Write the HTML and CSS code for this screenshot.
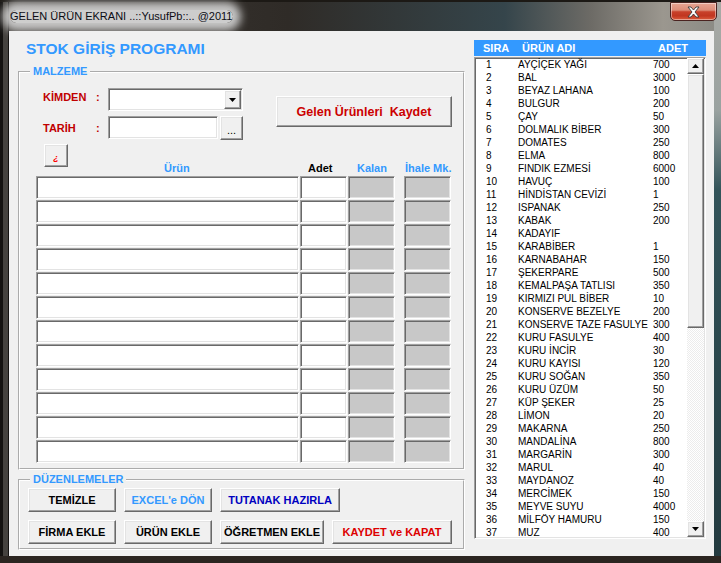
FILE: index.html
```html
<!DOCTYPE html>
<html lang="tr">
<head>
<meta charset="utf-8">
<title>GELEN ÜRÜN EKRANI</title>
<link rel="stylesheet" href="styles.css">
</head>
<body>
<div class="window">
  <header class="titlebar">
    <span class="title">GELEN ÜRÜN EKRANI ..::YusufPb::.. @2011</span>
    <button class="close" aria-label="Kapat">
      <svg width="13" height="12" viewBox="-1 -1 13 12"><path d="M0,0 H3 L5.5,3 L8,0 H11 L7,5 L11,10 H8 L5.5,7 L3,10 H0 L4,5 Z" fill="#fff" stroke="#3a3a3a" stroke-width="0.9" stroke-linejoin="round"/></svg>
    </button>
  </header>
  <main class="client">
    <section class="left">
      <h1 class="app-title">STOK GİRİŞ PROGRAMI</h1>
      <fieldset class="group malzeme">
        <legend>MALZEME</legend>
        <div class="form-top">
          <div class="fields">
            <div class="field">
              <span class="lbl up">KİMDEN</span><span class="colon up">:</span>
              <div class="combo sunken">
                <span class="combo-btn raised"><svg width="7" height="4" viewBox="0 0 7 4"><path d="M0,0 H7 L3.5,4 Z" fill="#000"/></svg></span>
              </div>
            </div>
            <div class="field">
              <span class="lbl">TARİH</span><span class="colon">:</span>
              <div class="date sunken"></div>
              <button class="dots raised">...</button>
            </div>
          </div>
          <button class="save raised">Gelen Ürünleri&nbsp; Kaydet</button>
        </div>
        <div class="grid">
          <div class="gh first"><button class="q raised">¿</button><span class="blue">Ürün</span></div>
          <div class="gh adet">Adet</div>
          <div class="gh kalan blue">Kalan</div>
          <div class="gh ihale blue">İhale Mk.</div>

          <div class="cell sunken"></div><div class="cell sunken"></div><div class="cell sunken ro"></div><div class="cell sunken ro ih"></div>
          <div class="cell sunken"></div><div class="cell sunken"></div><div class="cell sunken ro"></div><div class="cell sunken ro ih"></div>
          <div class="cell sunken"></div><div class="cell sunken"></div><div class="cell sunken ro"></div><div class="cell sunken ro ih"></div>
          <div class="cell sunken"></div><div class="cell sunken"></div><div class="cell sunken ro"></div><div class="cell sunken ro ih"></div>
          <div class="cell sunken"></div><div class="cell sunken"></div><div class="cell sunken ro"></div><div class="cell sunken ro ih"></div>
          <div class="cell sunken"></div><div class="cell sunken"></div><div class="cell sunken ro"></div><div class="cell sunken ro ih"></div>
          <div class="cell sunken"></div><div class="cell sunken"></div><div class="cell sunken ro"></div><div class="cell sunken ro ih"></div>
          <div class="cell sunken"></div><div class="cell sunken"></div><div class="cell sunken ro"></div><div class="cell sunken ro ih"></div>
          <div class="cell sunken"></div><div class="cell sunken"></div><div class="cell sunken ro"></div><div class="cell sunken ro ih"></div>
          <div class="cell sunken"></div><div class="cell sunken"></div><div class="cell sunken ro"></div><div class="cell sunken ro ih"></div>
          <div class="cell sunken"></div><div class="cell sunken"></div><div class="cell sunken ro"></div><div class="cell sunken ro ih"></div>
          <div class="cell sunken"></div><div class="cell sunken"></div><div class="cell sunken ro"></div><div class="cell sunken ro ih"></div>
        </div>
      </fieldset>
      <fieldset class="group duz">
        <legend>DÜZENLEMELER</legend>
        <div class="btn-rows">
          <div class="btn-row">
            <button class="b raised w88">TEMİZLE</button>
            <button class="b raised w88 c-light">EXCEL'e DÖN</button>
            <button class="b raised w120 c-navy">TUTANAK HAZIRLA</button>
          </div>
          <div class="btn-row">
            <button class="b raised w88">FİRMA EKLE</button>
            <button class="b raised w88">ÜRÜN EKLE</button>
            <button class="b raised w104">ÖĞRETMEN EKLE</button>
            <button class="b raised w120 c-red">KAYDET ve KAPAT</button>
          </div>
        </div>
      </fieldset>
    </section>
    <section class="right">
      <div class="list-head"><span>SIRA</span><span>ÜRÜN ADI</span><span>ADET</span></div>
      <div class="listbox">
        <div class="rows">
          <div class="row"><span>1</span><span>AYÇİÇEK YAĞI</span><span>700</span></div>
          <div class="row"><span>2</span><span>BAL</span><span>3000</span></div>
          <div class="row"><span>3</span><span>BEYAZ LAHANA</span><span>100</span></div>
          <div class="row"><span>4</span><span>BULGUR</span><span>200</span></div>
          <div class="row"><span>5</span><span>ÇAY</span><span>50</span></div>
          <div class="row"><span>6</span><span>DOLMALIK BİBER</span><span>300</span></div>
          <div class="row"><span>7</span><span>DOMATES</span><span>250</span></div>
          <div class="row"><span>8</span><span>ELMA</span><span>800</span></div>
          <div class="row"><span>9</span><span>FINDIK EZMESİ</span><span>6000</span></div>
          <div class="row"><span>10</span><span>HAVUÇ</span><span>100</span></div>
          <div class="row"><span>11</span><span>HİNDİSTAN CEVİZİ</span><span>1</span></div>
          <div class="row"><span>12</span><span>ISPANAK</span><span>250</span></div>
          <div class="row"><span>13</span><span>KABAK</span><span>200</span></div>
          <div class="row"><span>14</span><span>KADAYIF</span><span></span></div>
          <div class="row"><span>15</span><span>KARABİBER</span><span>1</span></div>
          <div class="row"><span>16</span><span>KARNABAHAR</span><span>150</span></div>
          <div class="row"><span>17</span><span>ŞEKERPARE</span><span>500</span></div>
          <div class="row"><span>18</span><span>KEMALPAŞA TATLISI</span><span>350</span></div>
          <div class="row"><span>19</span><span>KIRMIZI PUL BİBER</span><span>10</span></div>
          <div class="row"><span>20</span><span>KONSERVE BEZELYE</span><span>200</span></div>
          <div class="row"><span>21</span><span>KONSERVE TAZE FASULYE</span><span>300</span></div>
          <div class="row"><span>22</span><span>KURU FASULYE</span><span>400</span></div>
          <div class="row"><span>23</span><span>KURU İNCİR</span><span>30</span></div>
          <div class="row"><span>24</span><span>KURU KAYISI</span><span>120</span></div>
          <div class="row"><span>25</span><span>KURU SOĞAN</span><span>350</span></div>
          <div class="row"><span>26</span><span>KURU ÜZÜM</span><span>50</span></div>
          <div class="row"><span>27</span><span>KÜP ŞEKER</span><span>25</span></div>
          <div class="row"><span>28</span><span>LİMON</span><span>20</span></div>
          <div class="row"><span>29</span><span>MAKARNA</span><span>250</span></div>
          <div class="row"><span>30</span><span>MANDALİNA</span><span>800</span></div>
          <div class="row"><span>31</span><span>MARGARİN</span><span>300</span></div>
          <div class="row"><span>32</span><span>MARUL</span><span>40</span></div>
          <div class="row"><span>33</span><span>MAYDANOZ</span><span>40</span></div>
          <div class="row"><span>34</span><span>MERCİMEK</span><span>150</span></div>
          <div class="row"><span>35</span><span>MEYVE SUYU</span><span>4000</span></div>
          <div class="row"><span>36</span><span>MİLFÖY HAMURU</span><span>150</span></div>
          <div class="row"><span>37</span><span>MUZ</span><span>400</span></div>
        </div>
        <div class="scrollbar">
          <div class="sb-btn raised"><svg width="7" height="4" viewBox="0 0 7 4"><path d="M0,4 H7 L3.5,0 Z" fill="#000"/></svg></div>
          <div class="sb-thumb raised"></div>
          <div class="sb-track"></div>
          <div class="sb-btn raised"><svg width="7" height="4" viewBox="0 0 7 4"><path d="M0,0 H7 L3.5,4 Z" fill="#000"/></svg></div>
        </div>
      </div>
    </section>
  </main>
</div>
</body>
</html>
```

FILE: styles.css
```css
* { box-sizing: border-box; }
html, body { margin: 0; padding: 0; }
body {
  width: 721px;
  height: 563px;
  overflow: hidden;
  background: #1b1916;
  font-family: "Liberation Sans", Arial, sans-serif;
  font-size: 11px;
  color: #000;
}
button { font-family: inherit; padding: 0; cursor: default; }

.window {
  width: 721px;
  height: 563px;
  display: flex;
  flex-direction: column;
  background:
    linear-gradient(to bottom, transparent 556px, #2b2520 556px),
    linear-gradient(to bottom, #a9aaa5 0, #9aa2a0 110px, #33545a 190px, #22393e 100%) right top / 7px 100% no-repeat,
    linear-gradient(to right, #141210 0px, #141210 3px, #45423e 3px, #45423e 8px, #141210 8px, #141210 9px, transparent 9px),
    linear-gradient(to right, #3d3935 0%, #2f2b27 40%, #35454b 70%, #6d6b66 82%, #9b978f 92%, #8a8a84 100%);
}

/* title bar */
.titlebar {
  height: 31px;
  flex: none;
  display: flex;
  align-items: flex-start;
  border-top: 2px solid #1c1915;
  padding-left: 10px;
}
.title {
  margin-top: 8px;
  font-size: 11px;
  line-height: 13px;
  color: #0c0c14;
  white-space: nowrap;
  background: rgba(214, 214, 214, 0.95);
  box-shadow: 0 0 9px 8px rgba(214, 214, 214, 0.9);
  border-radius: 8px;
}
.close {
  margin-left: auto;
  margin-right: 4px;
  width: 47px;
  height: 19px;
  border: 1px solid #4a2320;
  border-radius: 0 0 5px 5px;
  background: linear-gradient(to bottom, #e7a694 0%, #dc8d78 42%, #c8412a 52%, #c13620 75%, #db5c3c 100%);
  box-shadow: inset 0 0 0 1px rgba(255, 255, 255, 0.45);
  display: flex;
  align-items: center;
  justify-content: center;
}
.close svg { display: block; }

/* client area */
.client {
  flex: 1;
  margin: 0 7px 7px 9px;
  background: #f0f0f0;
  display: flex;
  padding: 0 8px 0 9px;
}

/* 3D styles */
.sunken {
  background: #fff;
  border: 1px solid;
  border-color: #a0a0a0 #fff #fff #a0a0a0;
  box-shadow: inset 1px 1px 0 #696969, inset -1px -1px 0 #e3e3e3;
}
.raised {
  background: #f0f0f0;
  border: 1px solid;
  border-color: #fff #696969 #696969 #fff;
  box-shadow: inset -1px -1px 0 #a0a0a0, inset 1px 1px 0 #e3e3e3;
}

/* left column */
.left {
  width: 447px;
  display: flex;
  flex-direction: column;
}
.app-title {
  margin: 9px 0 0 8px;
  font-size: 15.5px;
  line-height: 18px;
  font-weight: bold;
  color: #3399ff;
}
.group {
  margin: 0;
  padding: 0;
  min-width: 0;
  border: 2px groove #fff;
}
.group legend {
  margin-left: 10px;
  padding: 0 3px;
  font-weight: bold;
  font-size: 11px;
  line-height: 13px;
  color: #3399ff;
}
.malzeme {
  margin-top: 7px;
  padding-bottom: 5px;
}

.form-top {
  display: flex;
  align-items: flex-start;
  margin-top: 10px;
  padding-left: 23px;
}
.fields {
  display: flex;
  flex-direction: column;
  gap: 5px;
}
.field {
  display: flex;
  align-items: center;
  height: 23px;
}
.lbl {
  width: 53px;
  font-weight: bold;
  color: #c00000;
}
.colon {
  width: 12px;
  font-weight: bold;
  color: #c00000;
}
.up { margin-bottom: 6px; }
.combo {
  width: 135px;
  height: 23px;
  display: flex;
  justify-content: flex-end;
  padding: 1px;
}
.combo-btn {
  width: 17px;
  height: 100%;
  display: flex;
  align-items: center;
  justify-content: center;
}
.combo-btn svg { display: block; }
.date {
  width: 110px;
  height: 23px;
}
.dots {
  margin-left: 2px;
  width: 23px;
  height: 24px;
  font-size: 11px;
  line-height: 14px;
  padding-top: 5px;
  color: #000;
}
.save {
  margin: 8px 0 0 33px;
  width: 176px;
  height: 31px;
  font-weight: bold;
  font-size: 12.5px;
  color: #cc0000;
}

/* grid */
.grid {
  display: grid;
  grid-template-columns: 263px 47px 47px 55px;
  grid-template-rows: 31px repeat(12, 23px);
  column-gap: 1px;
  row-gap: 1px;
  margin: 5px 0 0 16px;
}
.gh {
  display: flex;
  align-items: flex-end;
  font-weight: bold;
  line-height: 13px;
  white-space: nowrap;
}
.blue { color: #3399ff; }
.q {
  width: 24px;
  height: 23px;
  margin-left: 8px;
  align-self: flex-start;
  color: #ff0000;
  font-weight: bold;
  font-style: italic;
  font-size: 9px;
  line-height: 10px;
  padding-top: 4px;
}
.gh.first .blue { margin-left: 96px; }
.gh.adet { padding-left: 8px; }
.gh.kalan { padding-left: 9px; }
.gh.ihale { margin-left: 8px; padding-left: 1px; }
.cell { height: 23px; }
.cell.ro { background: #c8c8c8; }
.cell.ih { margin-left: 8px; }

/* düzenlemeler */
.duz {
  margin-top: 3px;
  padding-bottom: 4px;
}
.btn-rows {
  display: flex;
  flex-direction: column;
  gap: 8px;
  margin-top: 2px;
  padding-left: 8px;
}
.btn-row {
  display: flex;
  gap: 8px;
}
.b {
  height: 24px;
  font-weight: bold;
  font-size: 11px;
  color: #000;
}
.w88 { width: 88px; }
.w104 { width: 104px; }
.w120 { width: 120px; }
.c-light { color: #3399ff; }
.c-navy { color: #0000c0; }
.c-red { color: #dd0000; }

/* right column */
.right {
  width: 232px;
  margin-left: 9px;
  display: flex;
  flex-direction: column;
}
.list-head {
  margin-top: 9px;
  height: 16px;
  background: #3399ff;
  color: #fff;
  font-weight: bold;
  display: grid;
  grid-template-columns: 39px 136px auto;
  padding-left: 9px;
  line-height: 16px;
}
.listbox {
  margin-top: 1px;
  height: 482px;
  display: flex;
  padding: 0 1px 1px 1px;
  background: #fff;
  border: 1px solid;
  border-color: #a0a0a0 #fff #fff #a0a0a0;
  box-shadow: inset 1px 1px 0 #696969, inset -1px -1px 0 #e3e3e3;
}
.rows {
  flex: 1;
  overflow: hidden;
  padding-left: 10px;
  font-size: 10px;
}
.row {
  display: grid;
  grid-template-columns: 32px 135px auto;
  height: 13px;
  line-height: 13px;
  white-space: nowrap;
}
.scrollbar {
  width: 17px;
  display: flex;
  flex-direction: column;
}
.sb-btn {
  height: 16px;
  flex: none;
  display: flex;
  align-items: center;
  justify-content: center;
}
.sb-btn svg { display: block; }
.sb-thumb {
  height: 254px;
  flex: none;
}
.sb-track {
  flex: 1;
  background: repeating-conic-gradient(#ececec 0 25%, #fff 0 50%) 0 0 / 2px 2px;
}
```
